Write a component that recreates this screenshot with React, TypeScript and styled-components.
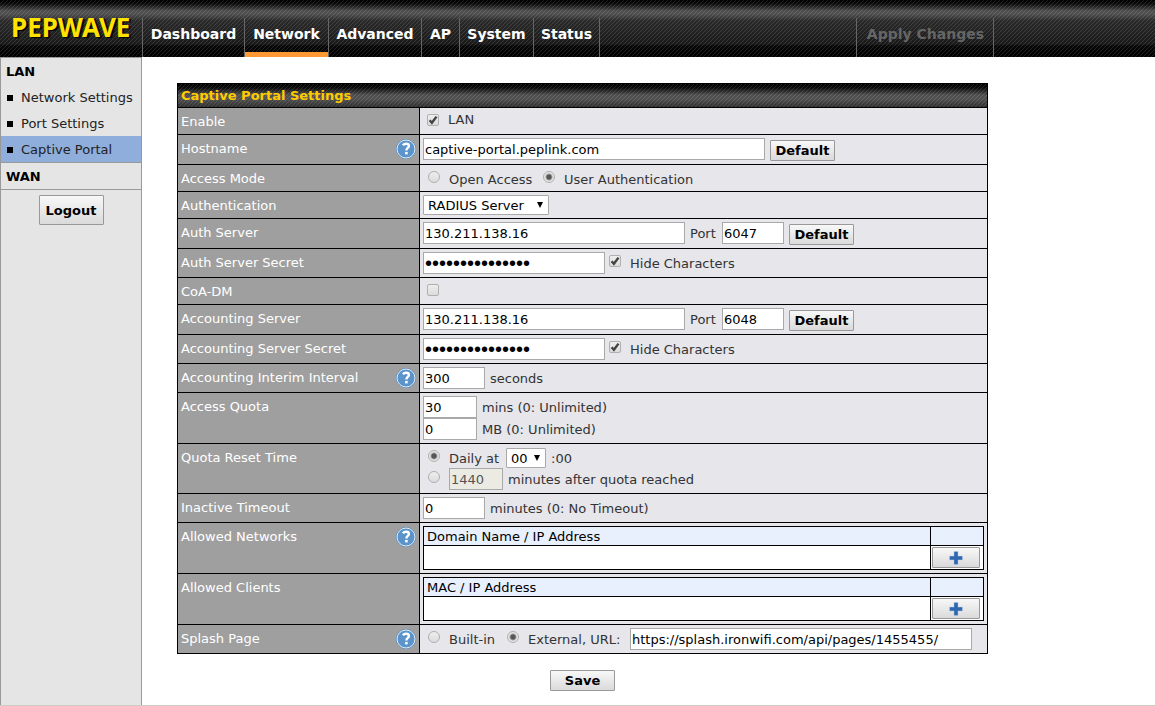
import React from "react";
import styled, { createGlobalStyle, css } from "styled-components";

const Global = createGlobalStyle`
  *, *::before, *::after { box-sizing: border-box; }
  html, body, #root { height: 100%; }
  body {
    margin: 0;
    background: #fff;
    color: #333;
    font: 13px/22px "DejaVu Sans", Verdana, sans-serif;
  }
  input, select, button { font: inherit; margin: 0; }
`;

const stripes =
  "linear-gradient(135deg, transparent 44%, rgba(255,255,255,0.12) 44% 56%, transparent 56%) 0 0 / 4px 4px";

const Page = styled.div`
  display: flex;
  flex-direction: column;
  min-height: 100%;
  border-bottom: 1px solid #ccccc4;
`;

const Header = styled.header`
  display: flex;
  align-items: flex-end;
  height: 57px;
  background: ${stripes}, linear-gradient(#000 0, #0c0c0c 4px, #505050 11px, #505050 14px, #2a2a2a 21px, #1a1a1a 44px, #080808 46px, #000 57px);
`;

const Logo = styled.a`
  width: 142px;
  height: 57px;
  padding: 11px 0 0 11px;
  color: #ffe200;
  font: bold 26px/32px "Noto Sans", sans-serif;
  text-decoration: none;
  text-shadow: 2px 1px 1px #000;
`;

const Nav = styled.nav`
  display: flex;
  flex: 1;
  height: 39px;
`;

const Tab = styled.a<{ $width: number; $active?: boolean }>`
  width: ${(p) => p.$width}px;
  border-left: 1px solid #666;
  ${(p) => p.$active && "box-shadow: inset 0 -5px #ff9933;"}
  color: #fff;
  font-size: 14px;
  font-weight: bold;
  line-height: 32px;
  text-align: center;
  text-decoration: none;
  white-space: nowrap;
`;

const NavEnd = styled.div`
  flex: 1;
  border-left: 1px solid #666;
`;

const Apply = styled.button`
  height: 39px;
  margin-right: 161px;
  padding: 0 9px 7px 10px;
  border: solid #666;
  border-width: 0 1px;
  background: none;
  color: #666;
  font-size: 14px;
  font-weight: bold;
`;

const Body = styled.div`
  display: flex;
  flex: 1;
`;

const Sidebar = styled.aside`
  width: 142px;
  border: solid #999;
  border-width: 1px 1px 0;
  background: #e5e5e5;
  text-align: center;
`;

const Group = styled.section`
  border-bottom: 1px solid #999;
  text-align: left;
`;

const GroupTitle = styled.h2`
  margin: 0;
  padding: 2px 0 0 5px;
  color: #000;
  font-size: 13px;
  line-height: 24px;
`;

const SideLink = styled.a<{ $active?: boolean }>`
  display: flex;
  align-items: center;
  gap: 8px;
  padding: 2px 0 0 6px;
  background: ${(p) => (p.$active ? "#8faedb" : "none")};
  color: #222;
  line-height: 24px;
  text-decoration: none;
  white-space: nowrap;
  &::before {
    content: "";
    width: 6px;
    height: 6px;
    background: #000;
  }
`;

const Button = styled.button<{ $tall?: boolean }>`
  flex: none;
  min-width: 65px;
  height: ${(p) => (p.$tall ? 30 : 21)}px;
  padding: 0 4px;
  border: 1px solid #999;
  border-radius: 1px;
  background: linear-gradient(#f8f8f8, #dadada);
  color: #000;
  font-weight: bold;
  line-height: 19px;
`;

const Logout = styled(Button)`
  margin-top: 5px;
`;

const Main = styled.main`
  flex: 1;
  padding: 26px 0 12px 35px;
`;

const Form = styled.form`
  width: calc(100% - 167px);
  min-width: 700px;
  text-align: center;
`;

const Panel = styled.section`
  margin-bottom: 16px;
  border: 1px solid #000;
  text-align: left;
`;

const PanelTitle = styled.h1`
  margin: 0;
  padding-left: 3px;
  background: ${stripes}, linear-gradient(#000 0, #0c0c0c 4px, #505050 11px, #505050 15px, #2a2a2a 24px);
  color: #ffcc00;
  font-size: 13px;
  line-height: 23px;
`;

const Row = styled.div`
  display: flex;
  border-top: 1px solid #000;
`;

const Label = styled.div`
  display: flex;
  justify-content: space-between;
  width: 242px;
  padding: 4px 3px 2px;
  border-right: 1px solid #000;
  background: #9f9f9f;
  color: #fff;
  line-height: 20px;
`;

const Value = styled.div<{ $compact?: boolean }>`
  flex: 1;
  min-height: 26px;
  padding: 3px 3px ${(p) => (p.$compact ? 1 : 3)}px;
  background: #e6e6eb;
`;

const Line = styled.div<{ $height?: number }>`
  display: flex;
  align-items: flex-start;
  gap: 5px;
  line-height: ${(p) => (p.$height ?? 22) - 2}px;
  & > ${Button} { margin-top: 2px; }
`;

const Text = styled.label<{ $width?: number }>`
  min-width: ${(p) => p.$width ?? 0}px;
  padding-top: 2px;
`;

const TextBox = styled.input<{ $width: number }>`
  width: ${(p) => p.$width}px;
  height: 22px;
  padding: 0 1px;
  border: 1px solid #a9a9a9;
  background: #fff;
  color: #000;
  line-height: 20px;
  &:disabled { background: #ebebe4; color: #545454; }
  &[type="password"] { font: 20px/20px "Liberation Sans", Arial, sans-serif; }
`;

const Pick = styled.span`
  position: relative;
  display: inline-flex;
  align-self: flex-end;
  &::after {
    content: "";
    position: absolute;
    top: 7px;
    right: 6px;
    border: solid transparent;
    border-width: 6px 3px 0;
    border-top-color: #000;
    pointer-events: none;
  }
`;

const Select = styled.select<{ $width: number }>`
  width: ${(p) => p.$width}px;
  height: 20px;
  padding: 1px 4px 0;
  appearance: none;
  border: 1px solid #a9a9a9;
  border-radius: 1px;
  background: #fff;
  color: #000;
  line-height: 17px;
`;

const tick = css`
  flex: none;
  appearance: none;
  width: 12px;
  height: 12px;
  border: 1px solid #b0b0b0;
  background: linear-gradient(#eee, #dcdcdc);
`;

const Radio = styled.input.attrs({ type: "radio" })`
  ${tick}
  margin: 3px 4px 0 5px;
  border-radius: 50%;
  &:checked { background: radial-gradient(circle, #555 0 2px, #e6e6e6 4px); }
`;

const CheckInput = styled.input.attrs({ type: "checkbox" })`
  ${tick}
  border-radius: 2px;
`;

const CheckBox = styled.span<{ $first?: boolean }>`
  position: relative;
  display: flex;
  margin: 3px 4px 0 ${(p) => (p.$first ? 4 : -1)}px;
  & > svg {
    position: absolute;
    top: 0;
    left: 0;
    display: none;
    pointer-events: none;
  }
  & > input:checked + svg { display: block; }
`;

const HelpButton = styled.button`
  display: flex;
  width: 20px;
  height: 20px;
  padding: 0;
  border: 0;
  background: none;
`;

const List = styled.table`
  width: 100%;
  border-collapse: collapse;
  table-layout: fixed;
  background: #fff;
  color: #000;
  th, td { border: 1px solid #000; text-align: left; }
  th { height: 19px; padding: 2px 3px 0; background: #e8f0fd; font-weight: normal; line-height: 16px; }
  td { height: 24px; padding: 1px; }
  th:last-child { width: 53px; }
`;

const AddButton = styled(Button)`
  display: flex;
  align-items: center;
  justify-content: center;
  width: 48px;
  min-width: 48px;
`;

const Help = ({ topic }: { topic: string }) => (
  <HelpButton type="button" aria-label={`Help: ${topic}`}>
    <svg width="20" height="20" viewBox="0 0 20 20">
      <circle cx="10" cy="10" r="9.5" fill="#5b93cb" stroke="#4f86bd" strokeWidth="1" />
      <circle cx="10" cy="10" r="9" fill="none" stroke="#e6f0fa" strokeWidth="1" />
      <path d="M6.9 6.3C7.6 5.3 8.7 4.7 10.1 4.7c1.8 0 2.8.9 2.8 2.2 0 2-2.5 2.1-2.5 4.5" fill="none" stroke="#fff" strokeWidth="2.4" />
      <rect x="9.1" y="12.9" width="2.6" height="2.5" fill="#fff" />
    </svg>
  </HelpButton>
);

const Check = ({ id, first, checked }: { id: string; first?: boolean; checked?: boolean }) => (
  <CheckBox $first={first}>
    <CheckInput id={id} defaultChecked={checked} />
    <svg width="12" height="12" viewBox="0 0 12 12">
      <path d="M2.6 6.2l2.3 2.6 4.6-6.2" fill="none" stroke="#444" strokeWidth="2.4" />
    </svg>
  </CheckBox>
);

type FieldProps = { name: string; id?: string; help?: boolean; compact?: boolean; children: React.ReactNode };

const Field = ({ name, id, help, compact, children }: FieldProps) => (
  <Row>
    <Label>
      {id ? <label htmlFor={id}>{name}</label> : <span>{name}</span>}
      {help && <Help topic={name} />}
    </Label>
    <Value $compact={compact}>{children}</Value>
  </Row>
);

const Server = ({ id, name, port }: { id: string; name: string; port: string }) => (
  <Field name={name} id={id}>
    <Line>
      <TextBox id={id} $width={262} defaultValue="130.211.138.16" />
      <Text htmlFor={`${id}-port`} $width={27}>Port</Text>
      <TextBox id={`${id}-port`} $width={62} defaultValue={port} />
      <Button type="button">Default</Button>
    </Line>
  </Field>
);

const Secret = ({ id, name }: { id: string; name: string }) => (
  <Field name={name} id={id}>
    <Line>
      <TextBox id={id} type="password" $width={182} defaultValue="secretsecretsec" />
      <Check id={`${id}-hide`} checked />
      <Text htmlFor={`${id}-hide`}>Hide Characters</Text>
    </Line>
  </Field>
);

const Allowed = ({ name, column, help }: { name: string; column: string; help?: boolean }) => (
  <Field name={name} help={help}>
    <List>
      <thead>
        <tr>
          <th>{column}</th>
          <th />
        </tr>
      </thead>
      <tbody>
        <tr>
          <td />
          <td>
            <AddButton type="button" aria-label={`Add to ${name}`}>
              <svg width="14" height="14" viewBox="0 0 14 14">
                <path d="M7 1.5v11M1.5 7h11" stroke="#a9c4e4" strokeWidth="4.6" strokeLinecap="square" strokeLinejoin="round" strokeOpacity="0.6" />
                <path d="M7 .8v12.4M.8 7h12.4" stroke="#2f68b0" strokeWidth="3.6" />
              </svg>
            </AddButton>
          </td>
        </tr>
      </tbody>
    </List>
  </Field>
);

const tabs = [
  { name: "Dashboard", width: 102 },
  { name: "Network", width: 84 },
  { name: "Advanced", width: 93 },
  { name: "AP", width: 38 },
  { name: "System", width: 74 },
  { name: "Status", width: 66 },
];
const lanLinks = ["Network Settings", "Port Settings", "Captive Portal"];

export default function App() {
  return (
    <>
      <Global />
      <Page>
        <Header>
          <Logo href="#">PEPWAVE</Logo>
          <Nav>
            {tabs.map((t) => (
              <Tab key={t.name} href="#" $width={t.width} $active={t.name === "Network"}>{t.name}</Tab>
            ))}
            <NavEnd />
          </Nav>
          <Apply type="button">Apply Changes</Apply>
        </Header>
        <Body>
          <Sidebar>
            <Group>
              <GroupTitle>LAN</GroupTitle>
              {lanLinks.map((l) => (
                <SideLink key={l} href="#" $active={l === "Captive Portal"}>{l}</SideLink>
              ))}
            </Group>
            <Group>
              <GroupTitle>WAN</GroupTitle>
            </Group>
            <Logout type="button" $tall>Logout</Logout>
          </Sidebar>
          <Main>
            <Form onSubmit={(e) => e.preventDefault()}>
              <Panel>
                <PanelTitle>Captive Portal Settings</PanelTitle>
                <Field name="Enable">
                  <Line $height={16}>
                    <Check id="lan" first checked />
                    <Text htmlFor="lan">LAN</Text>
                  </Line>
                </Field>
                <Field name="Hostname" id="host" help>
                  <Line>
                    <TextBox id="host" $width={342} defaultValue="captive-portal.peplink.com" />
                    <Button type="button">Default</Button>
                  </Line>
                </Field>
                <Field name="Access Mode" compact>
                  <Line>
                    <Radio name="mode" id="open" />
                    <Text htmlFor="open" $width={84}>Open Access</Text>
                    <Radio name="mode" id="user" defaultChecked />
                    <Text htmlFor="user">User Authentication</Text>
                  </Line>
                </Field>
                <Field name="Authentication" id="auth">
                  <Line $height={20}>
                    <Pick>
                      <Select id="auth" $width={126}>
                        <option>RADIUS Server</option>
                      </Select>
                    </Pick>
                  </Line>
                </Field>
                <Server id="auth-server" name="Auth Server" port="6047" />
                <Secret id="auth-secret" name="Auth Server Secret" />
                <Field name="CoA-DM" id="coa">
                  <Line $height={16}>
                    <Check id="coa" first />
                  </Line>
                </Field>
                <Server id="acct-server" name="Accounting Server" port="6048" />
                <Secret id="acct-secret" name="Accounting Server Secret" />
                <Field name="Accounting Interim Interval" id="interim" help>
                  <Line>
                    <TextBox id="interim" $width={62} defaultValue="300" />
                    <Text htmlFor="interim">seconds</Text>
                  </Line>
                </Field>
                <Field name="Access Quota" id="mins">
                  <Line>
                    <TextBox id="mins" $width={54} defaultValue="30" />
                    <Text htmlFor="mins">mins (0: Unlimited)</Text>
                  </Line>
                  <Line>
                    <TextBox id="mb" $width={54} defaultValue="0" />
                    <Text htmlFor="mb">MB (0: Unlimited)</Text>
                  </Line>
                </Field>
                <Field name="Quota Reset Time">
                  <Line $height={21}>
                    <Radio name="reset" id="daily" defaultChecked />
                    <Text htmlFor="daily" $width={52}>Daily at</Text>
                    <Pick>
                      <Select id="hour" aria-label="Hour" $width={40}>
                        <option>00</option>
                      </Select>
                    </Pick>
                    <Text htmlFor="hour">:00</Text>
                  </Line>
                  <Line>
                    <Radio name="reset" id="after" aria-label="After quota reached" />
                    <TextBox id="after-mins" disabled $width={54} defaultValue="1440" />
                    <Text htmlFor="after-mins">minutes after quota reached</Text>
                  </Line>
                </Field>
                <Field name="Inactive Timeout" id="timeout">
                  <Line>
                    <TextBox id="timeout" $width={62} defaultValue="0" />
                    <Text htmlFor="timeout">minutes (0: No Timeout)</Text>
                  </Line>
                </Field>
                <Allowed name="Allowed Networks" column="Domain Name / IP Address" help />
                <Allowed name="Allowed Clients" column="MAC / IP Address" />
                <Field name="Splash Page" help>
                  <Line>
                    <Radio name="splash" id="builtin" />
                    <Text htmlFor="builtin" $width={48}>Built-in</Text>
                    <Radio name="splash" id="external" defaultChecked />
                    <Text htmlFor="external" $width={97}>External, URL:</Text>
                    <TextBox aria-label="Splash page URL" $width={342} defaultValue="https://splash.ironwifi.com/api/pages/1455455/" />
                  </Line>
                </Field>
              </Panel>
              <Button type="submit">Save</Button>
            </Form>
          </Main>
        </Body>
      </Page>
    </>
  );
}
